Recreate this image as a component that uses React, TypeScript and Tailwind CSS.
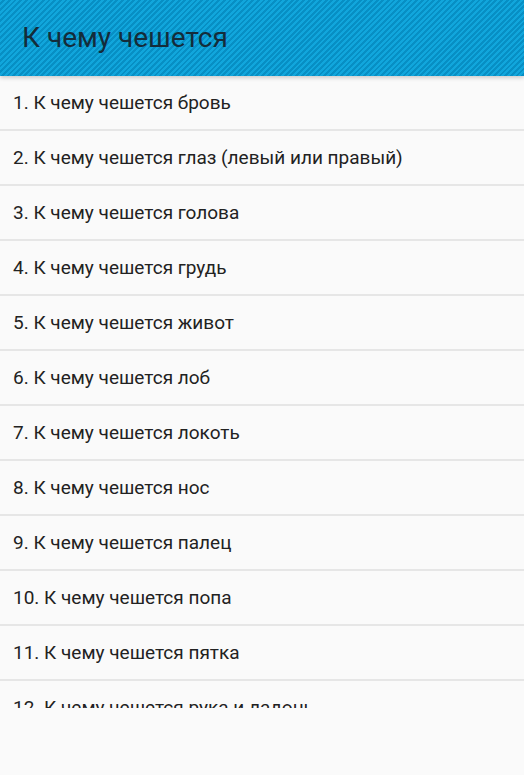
const items = [
  'К чему чешется бровь',
  'К чему чешется глаз (левый или правый)',
  'К чему чешется голова',
  'К чему чешется грудь',
  'К чему чешется живот',
  'К чему чешется лоб',
  'К чему чешется локоть',
  'К чему чешется нос',
  'К чему чешется палец',
  'К чему чешется попа',
  'К чему чешется пятка',
  'К чему чешется рука и ладонь',
  'К чему чешется спина',
]

export default function App() {
  return (
    <div className="flex h-[775px] w-[524px] flex-col bg-[#fafafa] font-['Roboto',sans-serif]">
      {/* action bar with striped blue background */}
      <header className="relative z-10 flex h-[76px] shrink-0 items-center bg-[repeating-linear-gradient(135deg,#11a6dc_0px,#11a6dc_2px,#078fc4_2px,#078fc4_4px)] pl-[22px] shadow-[0_2px_4px_rgba(0,0,0,0.18)]">
        <h1 className="text-[28px] leading-none text-[#142c3a]">К чему чешется</h1>
      </header>

      {/* list, clipped above the bottom bar */}
      <div className="h-[632px] shrink-0 overflow-hidden">
        {items.map((text, i) => (
          <div
            key={i}
            className="flex h-[55px] items-center border-b-2 border-[#e6e6e6] pl-[13px] pt-[1px] text-[19px] text-[#222]"
          >
            {i + 1}. {text}
          </div>
        ))}
      </div>
    </div>
  )
}
